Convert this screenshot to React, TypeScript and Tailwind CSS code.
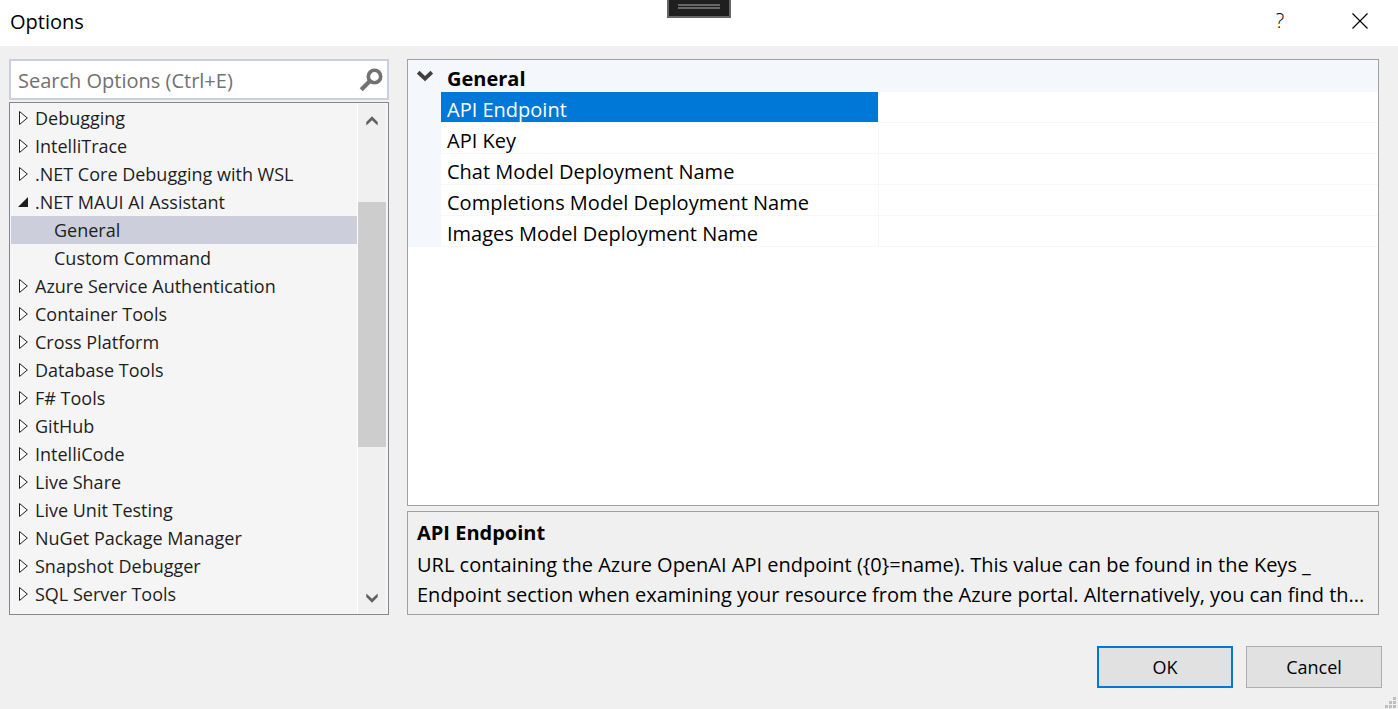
import { useState } from "react";

type Item = { label: string; state: "closed" | "open" | "leaf" };

const items: Item[] = [
  { label: "Debugging", state: "closed" },
  { label: "IntelliTrace", state: "closed" },
  { label: ".NET Core Debugging with WSL", state: "closed" },
  { label: ".NET MAUI AI Assistant", state: "open" },
  { label: "General", state: "leaf" },
  { label: "Custom Command", state: "leaf" },
  { label: "Azure Service Authentication", state: "closed" },
  { label: "Container Tools", state: "closed" },
  { label: "Cross Platform", state: "closed" },
  { label: "Database Tools", state: "closed" },
  { label: "F# Tools", state: "closed" },
  { label: "GitHub", state: "closed" },
  { label: "IntelliCode", state: "closed" },
  { label: "Live Share", state: "closed" },
  { label: "Live Unit Testing", state: "closed" },
  { label: "NuGet Package Manager", state: "closed" },
  { label: "Snapshot Debugger", state: "closed" },
  { label: "SQL Server Tools", state: "closed" },
];

const properties = [
  "API Endpoint",
  "API Key",
  "Chat Model Deployment Name",
  "Completions Model Deployment Name",
  "Images Model Deployment Name",
];

function Expander({ open }: { open: boolean }) {
  return (
    <svg width="11" height="16" viewBox="0 0 11 16" aria-hidden="true" className="shrink-0">
      {open ? (
        <path d="M10 3v10H0z" fill="#1e1e1e" />
      ) : (
        <path d="M1.5 1.5v13L9.300 8z" fill="#fff" stroke="#1e1e1e" strokeWidth="1" />
      )}
    </svg>
  );
}

function Chevron({ up = false, color }: { up?: boolean; color: string }) {
  return (
    <svg width="12" height="10" viewBox="0 0 12 10" aria-hidden="true">
      <path
        d={up ? "M0.300 5.900 6 0.300l5.700 5.600V9.600L6 4.200.3 9.600z" : "M.3.4 6 5.800 11.700.4v3.700L6 9.700.3 4.100z"}
        fill={color}
      />
    </svg>
  );
}

function SearchBox() {
  return (
    <div className="flex h-[41px] items-center border-2 border-[#cccedb] bg-white pr-1 pl-[7px]">
      <input
        type="text"
        aria-label="Search Options"
        placeholder="Search Options (Ctrl+E)"
        className="min-w-0 flex-1 bg-transparent pt-[2px] text-[20px] leading-7 outline-none placeholder:text-[#717171]"
      />
      <button type="button" aria-label="Search" className="shrink-0">
        <svg width="24" height="24" viewBox="0 0 24 24" aria-hidden="true">
          <circle cx="15.5" cy="8.5" r="6.2" fill="none" stroke="#717171" strokeWidth="3.6" />
          <path d="M11.2 12.8 2.2 21.8" stroke="#717171" strokeWidth="4.2" />
        </svg>
      </button>
    </div>
  );
}

function Tree() {
  const [selected, setSelected] = useState("General");
  return (
    <div className="flex flex-1 border border-[#828790] bg-[#f5f5f5] p-px">
      <ul className="min-w-0 flex-1">
        {items.map((item) => (
          <li key={item.label}>
            <button
              type="button"
              onClick={() => setSelected(item.label)}
              className={`flex h-7 w-full items-center gap-[6px] text-left text-[18px] leading-7 whitespace-nowrap text-[#1e1e1e] ${
                item.state === "leaf" ? "pl-[43px]" : "pl-[7px]"
              } ${selected === item.label ? "bg-[#cccedb]" : ""}`}
            >
              {item.state !== "leaf" && <Expander open={item.state === "open"} />}
              {item.label}
            </button>
          </li>
        ))}
      </ul>
      <div className="mr-px flex w-[29px] flex-col border-l border-white bg-[#f0f0f0]">
        <button type="button" aria-label="Scroll up" className="flex h-8 items-center justify-center pt-[2px]">
          <Chevron up color="#606060" />
        </button>
        <div className="flex-1 pt-[66px]">
          <div className="h-[245px] bg-[#cdcdcd]" />
        </div>
        <button type="button" aria-label="Scroll down" className="flex h-8 items-center justify-center pt-[2px]">
          <Chevron color="#606060" />
        </button>
      </div>
    </div>
  );
}

function PropertyGrid() {
  const [selected, setSelected] = useState(properties[0]);
  return (
    <div className="flex-1 border border-[#a0a0a0] bg-white">
      <table className="w-full table-fixed border-separate border-spacing-0 text-[20px] text-black">
        <colgroup>
          <col className="w-[33px]" />
          <col className="w-[438px]" />
          <col />
        </colgroup>
        <tbody>
          <tr className="h-8 bg-[#f4f7fc]">
            <td className="p-0">
              <button type="button" aria-label="Collapse General" className="flex h-8 w-full items-center justify-center pl-px">
                <svg width="16" height="12" viewBox="0 0 16 12" aria-hidden="true">
                  <path d="M1.200 2.200 8 8.600l6.800-6.400" fill="none" stroke="#404040" strokeWidth="3.800" />
                </svg>
              </button>
            </td>
            <th colSpan={2} scope="colgroup" className="p-0 pt-[6px] pl-[6px] text-left leading-[26px] font-bold">
              General
            </th>
          </tr>
          {properties.map((name) => (
            <tr key={name} onClick={() => setSelected(name)}>
              <td className="bg-[#f4f7fc] p-0" />
              <th
                scope="row"
                className={`border-r border-b border-[#f4f7fc] bg-clip-padding p-0 pt-[6px] pl-[6px] text-left leading-6 font-normal whitespace-nowrap ${
                  selected === name ? "bg-[#0078d7] text-white" : ""
                }`}
              >
                {name}
              </th>
              <td className="border-b border-[#f4f7fc] p-0">
                <input type="text" aria-label={name} className="block h-[30px] w-full px-1 outline-none" />
              </td>
            </tr>
          ))}
        </tbody>
      </table>
    </div>
  );
}

export default function App() {
  return (
    <div className="flex min-h-screen flex-col bg-[#f0f0f0] font-['Open_Sans','Noto_Sans',sans-serif]">
      <header className="relative flex h-[46px] items-center bg-white pr-[30px] pl-[10px]">
        <h1 className="flex-1 pb-[2px] text-[20px] text-black">Options</h1>
        <div className="absolute top-0 left-1/2 flex h-[18px] w-16 -translate-x-1/2 justify-center border-2 border-t-0 border-[#666666] bg-[#1f1f1f]">
          <div className="mt-1 h-[5px] w-[42px] border-y-2 border-[#666666]" />
        </div>
        <button type="button" aria-label="Help" className="mr-16 w-4 pb-1 text-[20px] font-light text-black">
          ?
        </button>
        <button type="button" aria-label="Close" className="flex w-4 justify-center pb-[5px]">
          <svg width="16" height="16" viewBox="0 0 16 16" aria-hidden="true">
            <path d="M.5.5l15 15M15.500.5l-15 15" stroke="#000" strokeWidth="1.2" />
          </svg>
        </button>
      </header>

      <main className="flex flex-1 gap-[18px] pt-[13px] pr-[19px] pl-[9px]">
        <section className="flex w-[380px] shrink-0 flex-col gap-[2px]">
          <SearchBox />
          <Tree />
        </section>
        <section className="flex min-w-0 flex-1 flex-col gap-[5px]">
          <PropertyGrid />
          <div className="h-[104px] overflow-hidden border border-[#a0a0a0] pt-[6px] pl-[9px] text-[20px] leading-[30px] text-black">
            <h2 className="font-bold">API Endpoint</h2>
            <p className="pt-[2px] whitespace-nowrap">
              URL containing the Azure OpenAI API endpoint ({"{0}"}=name). This value can be found in the Keys _
              <br />
              Endpoint section when examining your resource from the Azure portal. Alternatively, you can find th...
            </p>
          </div>
        </section>
      </main>

      <footer className="relative flex justify-end gap-[13px] pt-[31px] pr-4 pb-[21px] text-[18px] text-black">
        <button type="button" className="h-[42px] w-[136px] border-2 border-[#0078d7] bg-[#e1e1e1]">
          OK
        </button>
        <button type="button" className="h-[42px] w-[136px] border border-[#adadad] bg-[#e1e1e1]">
          Cancel
        </button>
        <svg width="11" height="11" viewBox="0 0 11 11" aria-hidden="true" className="absolute right-[2px] bottom-[1px]">
          <path d="M8 0h3v3H8zM4 4h3v3H4zM8 4h3v3H8zM0 8h3v3H0zM4 8h3v3H4zM8 8h3v3H8z" fill="#bfbfbf" />
        </svg>
      </footer>
    </div>
  );
}
